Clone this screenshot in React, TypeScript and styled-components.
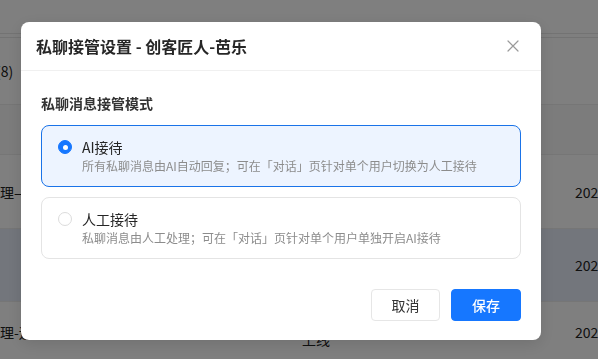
import styled, { createGlobalStyle } from "styled-components";
import { useState } from "react";

const GlobalStyle = createGlobalStyle`
  html, body {
    margin: 0;
    padding: 0;
    width: 598px;
    height: 359px;
    overflow: hidden;
    background: #ffffff;
    font-family: "Noto Sans CJK SC", "Noto Sans", "Liberation Sans", sans-serif;
  }
  * {
    box-sizing: border-box;
  }
`;

const Page = styled.div`
  width: 598px;
  height: 359px;
  overflow: hidden;
  background: #ffffff;
  color: #333333;
  font-size: 14px;
`;

const TopBar = styled.div`
  height: 34px;
  border-bottom: 1px solid #e6e6e6;
  margin-bottom: 3px;
`;

const Section = styled.div`
  border-top: 1px solid #e6e6e6;
  height: 67px;
  display: flex;
  align-items: center;
  margin-left: -60px;
`;

const Row = styled.div<{ $height: number; $active?: boolean }>`
  width: 660px;
  height: ${(p) => p.$height}px;
  border-top: 1px solid #ececec;
  background: ${(p) => (p.$active ? "#e6edf8" : "#ffffff")};
  display: grid;
  grid-template-columns: 300px 289px 120px;
  align-items: center;
  margin-left: -14px;
`;

const HeadRow = styled(Row)`
  background: #f9f9f9;
`;

const Cell = styled.div<{ $shift?: number; $indent?: number }>`
  white-space: nowrap;
  color: #222222;
  margin-top: ${(p) => p.$shift || 0}px;
  padding-left: ${(p) => p.$indent || 0}px;
`;

const Overlay = styled.div`
  position: fixed;
  inset: 0;
  background: rgba(0, 0, 0, 0.5);
  padding: 22px 0 0 21px;
`;

const Modal = styled.div`
  width: 520px;
  height: 318px;
  background: #ffffff;
  border-radius: 8px;
  box-shadow: 0 4px 16px rgba(0, 0, 0, 0.12);
  display: flex;
  flex-direction: column;
`;

const Header = styled.div`
  height: 49px;
  padding: 0 22px 0 15px;
  display: flex;
  align-items: center;
  justify-content: space-between;
  border-bottom: 1px solid #f0f0f0;
`;

const Title = styled.div`
  font-size: 16px;
  font-weight: 700;
  color: #262626;
`;

const CloseBtn = styled.button`
  border: none;
  background: none;
  padding: 0;
  width: 12px;
  height: 12px;
  display: flex;
  cursor: pointer;
  svg {
    width: 12px;
    height: 12px;
  }
`;

const Body = styled.div`
  padding: 21px 20px 0 20px;
  flex: 1;
`;

const Label = styled.div`
  font-size: 14px;
  font-weight: 600;
  color: #333333;
  line-height: 22px;
  margin-bottom: 11px;
`;

const Options = styled.div`
  display: flex;
  flex-direction: column;
  gap: 10px;
`;

const Option = styled.div<{ $checked: boolean }>`
  height: 62px;
  padding: 11px 16px;
  border-radius: 8px;
  border: 1px solid ${(p) => (p.$checked ? "#1a73e8" : "#e4e4e4")};
  background: ${(p) => (p.$checked ? "#edf4ff" : "#ffffff")};
  display: flex;
  align-items: flex-start;
  gap: 10px;
  cursor: pointer;
`;

const Radio = styled.span<{ $checked: boolean }>`
  width: 14px;
  height: 14px;
  margin-top: 3px;
  flex-shrink: 0;
  border-radius: 50%;
  border: 1px solid ${(p) => (p.$checked ? "#1677ff" : "#dcdcdc")};
  background: ${(p) => (p.$checked ? "#1677ff" : "#ffffff")};
  display: flex;
  align-items: center;
  justify-content: center;
  &::after {
    content: "";
    width: 5px;
    height: 5px;
    border-radius: 50%;
    background: ${(p) => (p.$checked ? "#ffffff" : "transparent")};
  }
`;

const OptionText = styled.div`
  display: flex;
  flex-direction: column;
`;

const OptionTitle = styled.div`
  font-size: 14px;
  line-height: 20px;
  color: #262626;
`;

const OptionDesc = styled.div`
  font-size: 12px;
  line-height: 18px;
  color: #8c8c8c;
`;

const Footer = styled.div`
  display: flex;
  justify-content: flex-end;
  gap: 11px;
  padding: 0 20px 19px;
`;

const Button = styled.button<{ $primary?: boolean }>`
  height: 32px;
  width: ${(p) => (p.$primary ? 70 : 69)}px;
  border-radius: 4px;
  font-family: inherit;
  font-size: 14px;
  cursor: pointer;
  border: 1px solid ${(p) => (p.$primary ? "#1677ff" : "#e6e6e6")};
  background: ${(p) => (p.$primary ? "#1677ff" : "#ffffff")};
  color: ${(p) => (p.$primary ? "#ffffff" : "#333333")};
  font-weight: ${(p) => (p.$primary ? 500 : 400)};
`;

const options = [
  {
    key: "ai",
    title: "AI接待",
    desc: "所有私聊消息由AI自动回复；可在「对话」页针对单个用户切换为人工接待",
  },
  {
    key: "manual",
    title: "人工接待",
    desc: "私聊消息由人工处理；可在「对话」页针对单个用户单独开启AI接待",
  },
];

function App() {
  const [mode, setMode] = useState("ai");
  return (
    <>
      <GlobalStyle />
      <Page>
        <TopBar />
        <Section>
          <Cell>全部账号(8)</Cell>
        </Section>
        <HeadRow $height={50}>
          <Cell />
          <Cell />
          <Cell />
        </HeadRow>
        <Row $height={74}>
          <Cell>经理—运营专员一组</Cell>
          <Cell $indent={28}>在线</Cell>
          <Cell>2024-05-12</Cell>
        </Row>
        <Row $height={73} $active>
          <Cell $indent={60}>客服专员二组</Cell>
          <Cell $indent={28}>在线</Cell>
          <Cell>2024-05-10</Cell>
        </Row>
        <Row $height={60}>
          <Cell>代理-运营专员三组</Cell>
          <Cell $shift={14} $indent={16}>
            上线
          </Cell>
          <Cell>2024-05-08</Cell>
        </Row>
      </Page>
      <Overlay>
        <Modal>
          <Header>
            <Title>私聊接管设置 - 创客匠人-芭乐</Title>
            <CloseBtn>
              <svg viewBox="0 0 12 12" fill="none">
                <path
                  d="M1 1L11 11M11 1L1 11"
                  stroke="#9a9a9a"
                  strokeWidth="1.2"
                  strokeLinecap="round"
                />
              </svg>
            </CloseBtn>
          </Header>
          <Body>
            <Label>私聊消息接管模式</Label>
            <Options>
              {options.map((o) => (
                <Option
                  key={o.key}
                  $checked={mode === o.key}
                  onClick={() => setMode(o.key)}
                >
                  <Radio $checked={mode === o.key} />
                  <OptionText>
                    <OptionTitle>{o.title}</OptionTitle>
                    <OptionDesc>{o.desc}</OptionDesc>
                  </OptionText>
                </Option>
              ))}
            </Options>
          </Body>
          <Footer>
            <Button>取消</Button>
            <Button $primary>保存</Button>
          </Footer>
        </Modal>
      </Overlay>
    </>
  );
}

export default App;
